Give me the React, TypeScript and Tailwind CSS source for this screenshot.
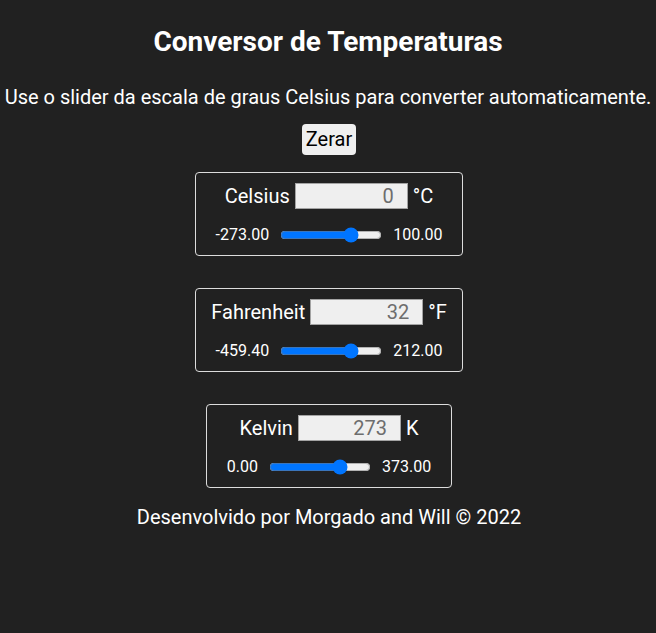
import React, { useState } from "react";

type CardProps = {
  label: string;
  unit: string;
  value: number;
  min: number;
  max: number;
  inputW: string;
  cardW: string;
  onChange?: (v: number) => void;
};

function Card({ label, unit, value, min, max, inputW, cardW, onChange }: CardProps) {
  return (
    <div className={`${cardW} border border-[#dcdcdc] rounded-[4px] py-[10px] flex flex-col items-center`}>
      <div className="flex items-center h-[26px] gap-[5px] text-[20px] leading-[24px]">
        <span>{label}</span>
        <input
          readOnly
          value={String(Math.round(value))}
          className={`${inputW} h-[26px] bg-[#efefef] border border-[#a3a3a3] text-right pr-[13px] text-[20px] text-[#6d6d6d] outline-none`}
          style={{ fontFamily: "Roboto, 'Liberation Sans', sans-serif" }}
        />
        <span>{unit}</span>
      </div>
      <div className="flex items-center h-[20px] mt-[16px] gap-[11px] text-[16px] leading-[20px]">
        <span>{min.toFixed(2)}</span>
        <input
          type="range"
          min={min}
          max={max}
          step="any"
          value={value}
          onChange={(e) => onChange && onChange(parseFloat(e.target.value))}
          className="w-[102px] m-0"
        />
        <span>{max.toFixed(2)}</span>
      </div>
    </div>
  );
}

export default function App() {
  const [c, setC] = useState(0);
  const f = c * 1.8 + 32;
  const k = c + 273;
  return (
    <div
      className="min-h-[633px] w-full bg-[#212121] text-white flex flex-col items-center"
      style={{ fontFamily: "Roboto, 'Liberation Sans', sans-serif" }}
    >
      <h1 className="mt-[26px] text-[28px] leading-[32px] font-bold">Conversor de Temperaturas</h1>
      <p className="mt-[27px] text-[20px] leading-[24px] whitespace-nowrap">
        Use o slider da escala de graus Celsius para converter automaticamente.
      </p>
      <button
        onClick={() => setC(0)}
        className="mt-[15px] ml-[2px] bg-[#efefef] text-black text-[20px] leading-[25px] px-[4px] py-[3px] rounded-[4px]"
      >
        Zerar
      </button>
      <div className="mt-[17px] ml-[2px]">
        <Card label="Celsius" unit="°C" value={c} min={-273} max={100} inputW="w-[113px]" cardW="w-[268px]" onChange={setC} />
      </div>
      <div className="mt-[32px] ml-[2px]">
        <Card label="Fahrenheit" unit="°F" value={f} min={-459.4} max={212} inputW="w-[113px]" cardW="w-[268px]" onChange={(v) => setC((v - 32) / 1.8)} />
      </div>
      <div className="mt-[32px] ml-[2px]">
        <Card label="Kelvin" unit="K" value={k} min={0} max={373} inputW="w-[103px]" cardW="w-[246px]" onChange={(v) => setC(v - 273)} />
      </div>
      <p className="mt-[17px] ml-[2px] text-[20px] leading-[24px]">Desenvolvido por Morgado and Will © 2022</p>
    </div>
  );
}
